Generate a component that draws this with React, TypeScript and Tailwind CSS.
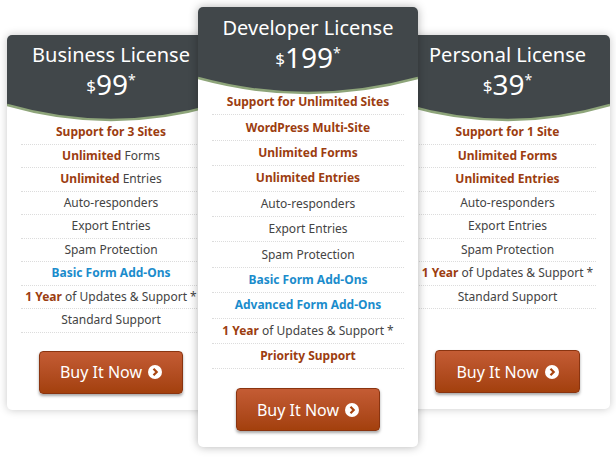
import React from 'react'

type Row = React.ReactNode

const R = ({ c }: { c: string }) => <b className="text-[#9c3d10]">{c}</b>
const B = ({ c }: { c: string }) => <b className="text-[#1b8ccc]">{c}</b>

const Header = ({ title, price, featured }: { title: string; price: string; featured?: boolean }) => (
  <div>
    <div className={`bg-[#41474a] text-white text-center rounded-t-[5px] ${featured ? 'pt-[10px]' : 'pt-[9px]'}`}>
      <div className="text-[20px] leading-[22px]">{title}</div>
      <div className="leading-[28px]">
        <span className="text-[17px] align-[3px]">$</span>
        <span className="text-[28px]">{price}</span>
        <span className="text-[14px] align-[10px]">*</span>
      </div>
    </div>
    <svg viewBox="0 0 200 20" preserveAspectRatio="none" className="block w-full h-[20px]">
      <path d="M0 0 L200 0 L200 2 Q100 32 0 2 Z" fill="#41474a" />
      <path d="M0 2 Q100 32 200 2" fill="none" stroke="#8ea57a" strokeWidth="2.5" />
    </svg>
  </div>
)

const Button = () => (
  <button className="flex items-center gap-[6px] px-[20px] h-[43px] rounded-[4px] border border-[#8a3410] bg-gradient-to-b from-[#c45c34] to-[#a3400c] text-white text-[16px] shadow-[0_2px_3px_rgba(0,0,0,0.35)]">
    Buy It Now
    <svg width="14" height="14" viewBox="0 0 14 14">
      <circle cx="7" cy="7" r="7" fill="white" />
      <path d="M5.5 3.8 L8.7 7 L5.5 10.2" fill="none" stroke="#a8440f" strokeWidth="2.2" />
    </svg>
  </button>
)

const Card = ({ title, price, rows, featured, className, rowH, listMt, btnMt, pb }: {
  title: string; price: string; rows: Row[]; featured?: boolean; className: string; rowH: string; listMt: string; btnMt: string; pb: string
}) => (
  <div className={`bg-white rounded-[5px] shadow-[0_0_8px_rgba(0,0,0,0.22)] flex flex-col ${pb} ${className}`}>
    <Header title={title} price={price} featured={featured} />
    <div className={`px-[14px] ${listMt}`}>
      {rows.map((r, i) => (
        <div key={i} className={`${rowH} flex items-center justify-center text-[12px] text-[#444] border-b border-dotted border-[#dcdcdc]`}>
          <span>{r}</span>
        </div>
      ))}
    </div>
    <div className={`flex justify-center ${btnMt}`}><Button /></div>
  </div>
)

export default function App() {
  return (
    <div className="w-[616px] h-[459px] bg-white flex items-start pl-[7px] pt-[7px] font-['Liberation_Sans',Arial,sans-serif]">
      <Card
        className="w-[208px] mt-[28px] relative z-0"
        title="Business License" price="99" rowH="h-[23.5px]" listMt="mt-[-2px]" btnMt="mt-[18px]" pb="pb-[16px]"
        rows={[
          <R c="Support for 3 Sites" />,
          <><R c="Unlimited" /> Forms</>,
          <><R c="Unlimited" /> Entries</>,
          'Auto-responders', 'Export Entries', 'Spam Protection',
          <B c="Basic Form Add-Ons" />,
          <><R c="1 Year" /> of Updates &amp; Support *</>,
          'Standard Support',
        ]}
      />
      <Card
        featured
        className="w-[220px] ml-[-17px] relative z-10 shadow-[0_0_10px_rgba(0,0,0,0.3)]"
        title="Developer License" price="199" rowH="h-[25.4px]" listMt="mt-[-6px]" btnMt="mt-[19px]" pb="pb-[16px]"
        rows={[
          <R c="Support for Unlimited Sites" />,
          <R c="WordPress Multi-Site" />,
          <R c="Unlimited Forms" />,
          <R c="Unlimited Entries" />,
          'Auto-responders', 'Export Entries', 'Spam Protection',
          <B c="Basic Form Add-Ons" />,
          <B c="Advanced Form Add-Ons" />,
          <><R c="1 Year" /> of Updates &amp; Support *</>,
          <R c="Priority Support" />,
        ]}
      />
      <Card
        className="w-[205px] ml-[-13px] mt-[28px] relative z-0"
        title="Personal License" price="39" rowH="h-[23.5px]" listMt="mt-[-2px]" btnMt="mt-[41px]" pb="pb-[16px]"
        rows={[
          <R c="Support for 1 Site" />,
          <R c="Unlimited Forms" />,
          <R c="Unlimited Entries" />,
          'Auto-responders', 'Export Entries', 'Spam Protection',
          <><R c="1 Year" /> of Updates &amp; Support *</>,
          'Standard Support',
        ]}
      />
    </div>
  )
}
